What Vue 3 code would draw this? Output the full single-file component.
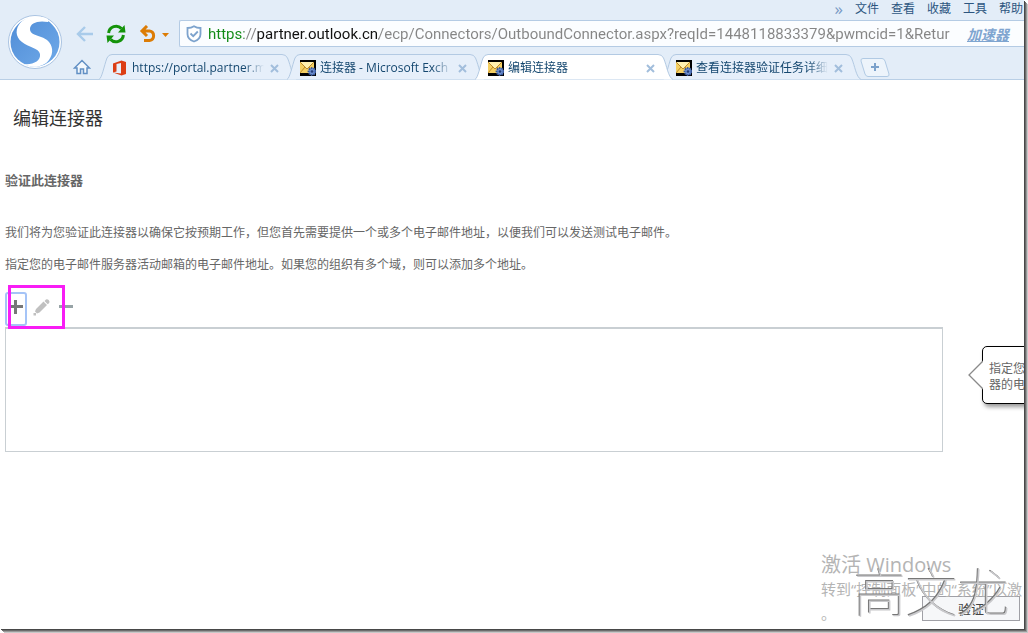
<script setup>
import { ref } from 'vue'

const menus = ['文件', '查看', '收藏', '工具', '帮助']
const address = ref('https://partner.outlook.cn/ecp/Connectors/OutboundConnector.aspx?reqId=1448118833379&pwmcid=1&Retur')
const active = ref(2)
const tabs = [
  { icon: 'office', title: 'https://portal.partner.m' },
  { icon: 'mail', title: '连接器 - Microsoft Exch' },
  { icon: 'mail', title: '编辑连接器' },
  { icon: 'mail', title: '查看连接器验证任务详细' }
]
</script>

<template>
  <div class="desktop">
    <div class="window">
      <header class="chrome">
        <svg class="logo" viewBox="0 0 56 56" aria-hidden="true">
          <defs>
            <linearGradient id="disc" x1="0" y1="0" x2="1" y2="1">
              <stop offset="0" stop-color="#4f8cd6" />
              <stop offset="1" stop-color="#70aae9" />
            </linearGradient>
          </defs>
          <circle cx="28" cy="28" r="26.500" fill="#fff" stroke="#a9c3e2" />
          <circle cx="28" cy="28" r="24.500" fill="url(#disc)" />
          <path fill="#fff" d="M41 5C32 1 21 2 14 8C8 14 8 23 15 28C21 33 32 34 33 40C34 47 26 51 17 50C25 55 37 53 42 46C47 39 46 31 40 26C34 21 23 22 23 15C23 9 31 6 41 8Z" />
        </svg>

        <div class="bars">
          <nav class="menu">
            <button class="plain more">»</button>
            <button v-for="m in menus" :key="m" class="plain">{{ m }}</button>
          </nav>

          <div class="tools">
            <button class="plain back" aria-label="后退">
              <svg width="18" height="16" viewBox="0 0 18 16"><path d="M17 8H3M9 1L2 8L9 15" fill="none" stroke="#a9cbea" stroke-width="2.4" /></svg>
            </button>
            <button class="plain reload" aria-label="刷新">
              <svg width="22" height="20" viewBox="0 0 22 20">
                <path d="M3.600 9A7.500 7.500 0 0 1 16.500 4.600M18.400 11A7.500 7.500 0 0 1 5.500 15.400" fill="none" stroke="#14930a" stroke-width="3" />
                <path d="M13 8.500H20.500L19.500 1ZM9 11.500H1.500L2.500 19Z" fill="#14930a" />
              </svg>
            </button>
            <button class="plain undo" aria-label="恢复">
              <svg width="30" height="18" viewBox="0 0 30 18">
                <path d="M3 6H10.500A4.800 4.800 0 0 1 10.500 15.500H5M8 1L3 6L8 11" fill="none" stroke="#dc7c05" stroke-width="3" />
                <path d="M23 8H30L26.500 12Z" fill="#dc7c05" />
              </svg>
            </button>
            <div class="address">
              <svg width="16" height="18" viewBox="0 0 16 18" aria-hidden="true"><path d="M8 1.200C10 2.500 12.500 3 14.500 3V9C14.500 13 11 15.500 8 16.500C5 15.500 1.500 13 1.500 9V3C3.500 3 6 2.500 8 1.200Z" fill="#fff" stroke="#7da3cd" stroke-width="1.800" /><path d="M4.500 8.500L7.200 11.200L11.800 6.500" fill="none" stroke="#7da3cd" stroke-width="1.800" /></svg>
              <input v-model="address" type="text" aria-label="地址" spellcheck="false" />
              <a href="#">加速器</a>
            </div>
          </div>

          <div class="tabrow">
            <button class="plain home" aria-label="主页">
              <svg width="18" height="16" viewBox="0 0 18 16"><path d="M1.500 9L9 1.500L16.500 9H14V14.500H10.500V10H7.500V14.500H4V9Z" fill="#f3f8fd" stroke="#6290c4" stroke-width="1.500" /></svg>
            </button>
            <div v-for="(t, i) in tabs" :key="t.title" class="tab" :class="{ active: i === active }">
              <svg class="shape" width="198" height="26" viewBox="0 0 198 26" aria-hidden="true"><path d="M0 25.500C3 24 5 12 8 4Q9.500 .500 13 .500H183Q187 .500 188.500 4C192 12 193 23 198 25.500" /></svg>
              <svg v-if="t.icon === 'office'" class="icon" viewBox="0 0 16 16" aria-hidden="true"><path d="M1 3.500L9.500 .500L14 2V14L9.500 15.500L1 12.500L9 13.500V3L4.500 4V11.500L1 12.500Z" fill="#dc3e15" /></svg>
              <svg v-else class="icon" viewBox="0 0 16 16" aria-hidden="true">
                <rect width="16" height="16" fill="#000" />
                <rect y="2" width="14" height="11" fill="#f4cf62" />
                <path d="M0 2H14L7 9Z" fill="#fff0ae" />
                <path d="M0 2L7 9L14 2M0 13L5 7M14 13L9 7" fill="none" stroke="#bd8b2b" />
                <circle cx="12" cy="11.500" r="3.500" fill="#6d8fd0" stroke="#37579c" stroke-width="1.800" stroke-dasharray="1.500 1" />
                <circle cx="12" cy="11.500" r="1.300" fill="#243d78" />
              </svg>
              <button class="plain title" @click="active = i">{{ t.title }}</button>
              <button class="plain close" aria-label="关闭">
                <svg width="9" height="9" viewBox="0 0 9 9"><path d="M1 1L8 8M8 1L1 8" stroke="#a2bedc" stroke-width="2" /></svg>
              </button>
            </div>
            <button class="plain add" aria-label="新标签页">
              <svg width="30" height="19" viewBox="0 0 30 19"><path d="M3 .500H22Q24 .500 25 3L29 16Q29.500 18.500 27 18.500H8Q6 18.500 5 16L1 3Q.500 .500 3 .500Z" fill="#edf4fb" stroke="#b1cae4" /><path d="M15 5V13M11 9H19" stroke="#7ba1cb" stroke-width="2" /></svg>
            </button>
          </div>
        </div>
      </header>

      <main class="page">
        <h1>编辑连接器</h1>
        <h2>验证此连接器</h2>
        <p>我们将为您验证此连接器以确保它按预期工作，但您首先需要提供一个或多个电子邮件地址，以便我们可以发送测试电子邮件。</p>
        <p>指定您的电子邮件服务器活动邮箱的电子邮件地址。如果您的组织有多个域，则可以添加多个地址。</p>

        <div class="actions">
          <button class="plain plus" aria-label="添加">
            <svg width="14" height="14" viewBox="0 0 14 14"><path d="M6.500 0V14M0 6.500H14" stroke="#777" stroke-width="3" /></svg>
          </button>
          <button class="plain pencil" aria-label="编辑">
            <svg width="17" height="17" viewBox="0 0 17 17"><path d="M.500 16.500V14H3V16.500ZM2 12.500L3 10L10.500 2.500L14 6L6.500 13.500L4 14.500ZM11.500 2L13 .500Q14.500 0 15.700 1Q17 2.300 16.200 4L14.700 5.300Z" fill="#c0c0c0" /></svg>
          </button>
          <button class="plain minus" aria-label="删除">
            <svg width="14" height="14" viewBox="0 0 14 14"><path d="M0 6.500H14" stroke="#97a3a6" stroke-width="3" /></svg>
          </button>
          <span class="highlight"></span>
        </div>

        <div class="list-area">
          <div class="list" role="listbox" aria-label="电子邮件地址"></div>
          <aside class="callout">
            <svg width="15" height="30" viewBox="0 0 15 30" aria-hidden="true"><path d="M15 1L1 15L15 29" fill="#fff" stroke="#8a8a8a" stroke-width="1.300" /></svg>
            指定您的电子邮件服务<br />器的电子邮件地址
          </aside>
        </div>

        <div class="footer"><button class="verify">验证</button></div>

        <div class="activate">
          <div class="big">激活 Windows</div>
          <div>转到“控制面板”中的“系统”以激</div>
          <div>。</div>
        </div>
        <div class="signature">高文龙</div>
      </main>
    </div>
  </div>
</template>

<style>
html,
body {
  background: #fff;
}
</style>

<style scoped>
* {
  box-sizing: border-box;
}
.desktop {
  display: flex;
  min-height: 100vh;
  padding: 0 4px 4px 0;
  overflow: hidden;
}
.window {
  flex: 1;
  min-width: 0;
  display: flex;
  flex-direction: column;
  background: #fff;
  box-shadow: 1px 1px 0 #484848, 2px 2px 0 #6c6c6c, 3px 3px 0 #999, 4px 4px 0 #c8c8c8;
  font-family: "Open Sans", "Noto Sans CJK SC", sans-serif;
  font-size: 12px;
  color: #666;
}
.plain {
  padding: 0;
  border: 0;
  background: none;
  font: inherit;
  color: inherit;
  display: flex;
  align-items: center;
  white-space: nowrap;
}
.chrome {
  display: flex;
  height: 80px;
  background: #e3edf8;
  border-bottom: 1px solid #b9cfe6;
}
.logo {
  width: 56px;
  height: 56px;
  margin: 14px 9px 0 7px;
  flex: none;
}
.bars {
  flex: 1;
  min-width: 0;
}
.menu {
  display: flex;
  justify-content: flex-end;
  align-items: center;
  gap: 12px;
  height: 20px;
  padding: 0 1px 2px 0;
  line-height: 18px;
  color: #2c557f;
}
.more {
  font-size: 17px;
  color: #7799c4;
}
.tools {
  display: flex;
  align-items: center;
  height: 27px;
  padding-left: 4px;
}
.reload {
  margin-left: 11px;
}
.undo {
  margin: 0 10px 0 12px;
}
.address {
  flex: 1;
  min-width: 0;
  height: 27px;
  display: flex;
  align-items: center;
  padding: 0 15px 0 6px;
  background: #fbfdff;
  border: 1px solid #b4cbe4;
  border-right: 0;
  border-radius: 2px 0 0 2px;
}
.address input {
  flex: 1;
  min-width: 0;
  margin: 0 6px;
  padding: 0;
  border: 0;
  outline: 0;
  height: 25px;
  font: 15px Roboto, sans-serif;
  background: linear-gradient(90deg, #118a16 36px, #858585 36px, #858585 49px, #111 49px, #111 171px, #858585 171px);
  background-clip: text;
  color: transparent;
}
.address a {
  font-size: 14px;
  font-weight: bold;
  font-style: italic;
  color: #7fa5d0;
}
.tabrow {
  display: flex;
  align-items: center;
  height: 26px;
  margin-top: 7px;
  color: #14476f;
}
.home {
  width: 27px;
  flex: none;
  padding-left: 1px;
}
.tab {
  position: relative;
  width: 198px;
  height: 26px;
  flex: none;
  display: flex;
  align-items: center;
  padding: 2px 18px 0 13px;
  margin-right: -10px;
}
.tab.active {
  z-index: 1;
}
.shape {
  position: absolute;
  inset: 0;
  fill: #e6effa;
  stroke: #b3cae3;
}
.active .shape {
  fill: #fff;
}
.icon {
  position: relative;
  width: 16px;
  height: 16px;
  flex: none;
}
.tab .title {
  position: relative;
  flex: 1;
  min-width: 0;
  margin: 0 6px 0 4px;
  padding-bottom: 2px;
  overflow: hidden;
  mask-image: linear-gradient(90deg, #000 85%, transparent);
}
.close {
  position: relative;
}
.add {
  margin-left: 9px;
}
.page {
  position: relative;
  flex: 1;
  display: flex;
  flex-direction: column;
  overflow: hidden;
  padding: 0 4px 8px 5px;
}
h1 {
  margin: 26px 0 0 8px;
  font-size: 18px;
  line-height: 24px;
  font-weight: normal;
  color: #333;
}
h2 {
  margin: 40px 0 33px;
  font-size: 13px;
  line-height: 20px;
  font-weight: bold;
}
p {
  margin: 0 0 12px;
  line-height: 20px;
}
.actions {
  position: relative;
  display: flex;
  align-items: center;
  height: 34px;
  margin-top: 5px;
}
.actions .plain {
  height: 34px;
  padding-bottom: 4px;
}
.actions .plus {
  width: 22px;
  justify-content: center;
  margin-right: 6px;
  border: 2px solid #a5c4f7;
  border-radius: 3px;
}
.actions .minus {
  margin-left: 9px;
}
.highlight {
  position: absolute;
  left: 3px;
  top: -7px;
  width: 57px;
  height: 44px;
  border: 3px solid #f81df5;
  z-index: 2;
}
.list-area {
  position: relative;
  margin: 1px 77px 0 0;
}
.list {
  height: 125px;
  border: 1px solid #c9cfd3;
  border-top-width: 2px;
}
.callout {
  position: absolute;
  left: calc(100% + 39px);
  top: 19px;
  width: 150px;
  height: 58px;
  padding: 14px 6px;
  line-height: 16px;
  white-space: nowrap;
  background: #fff;
  border: 1px solid #000;
  border-radius: 5px;
  box-shadow: 2px 3px 4px #999;
}
.callout svg {
  position: absolute;
  left: -15px;
  top: 13px;
}
.footer {
  display: flex;
  justify-content: flex-end;
  margin-top: auto;
}
.verify {
  width: 98px;
  height: 25px;
  padding: 0;
  border: 1px solid #a0a0a6;
  background: #f6f7f9;
  font: 13px "Open Sans", "Noto Sans CJK SC", sans-serif;
  color: #444;
}
.activate {
  position: absolute;
  right: 0;
  bottom: 4px;
  width: 203px;
  font-size: 15px;
  line-height: 24px;
  white-space: nowrap;
  color: #b4b4b4;
  pointer-events: none;
}
.big {
  font-size: 20px;
}
.signature {
  position: absolute;
  right: 14px;
  bottom: 8px;
  font: 100 52px/60px "Noto Sans CJK SC", sans-serif;
  color: #c9c9cc;
  text-shadow: -1px -1px 0 #777;
  pointer-events: none;
}
</style>
